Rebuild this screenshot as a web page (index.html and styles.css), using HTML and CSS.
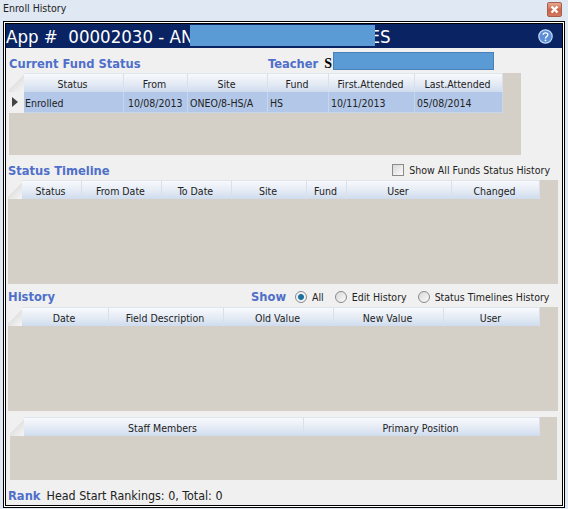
FILE: index.html
```html
<!DOCTYPE html>
<html>
<head>
    <title>Enroll History</title>
    <link rel="stylesheet" href="styles.css">
</head>
<body>
    <div class="window">
        <div class="titlebar">
            <span class="title">Enroll History</span>
            <button class="close">
                <svg width="9" height="9" viewBox="0 0 9 9"><path d="M1.5 1.5L7.5 7.5M7.5 1.5L1.5 7.5" stroke="#fff" stroke-width="2.4"/></svg>
            </button>
        </div>
        <div class="dialog">
            <div class="banner">
                <span class="app">App #  00002030 - AN<span class="redact name"></span><span class="tail">ES</span></span>
                <svg class="help" width="15" height="15" viewBox="0 0 15 15">
                    <circle cx="7.5" cy="7.5" r="6.7" fill="#5b8fd8" stroke="#c4d8f4" stroke-width="1.2"/>
                    <path d="M5.2 5.8C5.2 3.2 9.8 3.2 9.8 5.7C9.8 7.6 7.5 7.5 7.5 9.4" fill="none" stroke="#fff" stroke-width="1.4"/>
                    <circle cx="7.5" cy="11.3" r="0.9" fill="#fff"/>
                </svg>
            </div>

            <div class="head head-fund">
                <span class="heading fund-heading">Current Fund Status</span>
                <span class="heading">Teacher</span>
                <span class="teacher">S</span>
                <span class="redact teacher-name"></span>
            </div>
            <div class="grid grid-fund">
                <div class="cols cols-fund">
                    <div class="corner"></div>
                    <div class="th">Status</div>
                    <div class="th">From</div>
                    <div class="th">Site</div>
                    <div class="th">Fund</div>
                    <div class="th">First.Attended</div>
                    <div class="th">Last.Attended</div>
                </div>
                <div class="cols cols-fund row">
                    <div class="rowhead">
                        <svg width="6" height="10" viewBox="0 0 6 10"><path d="M0 0L6 5L0 10Z" fill="#444"/></svg>
                    </div>
                    <div class="td td-status">Enrolled</div>
                    <div class="td td-from">10/08/2013</div>
                    <div class="td">ONEO/8-HS/A</div>
                    <div class="td">HS</div>
                    <div class="td">10/11/2013</div>
                    <div class="td">05/08/2014</div>
                </div>
            </div>

            <div class="head head-timeline">
                <span class="heading">Status Timeline</span>
                <label class="option"><input type="checkbox" class="check">Show All Funds Status History</label>
            </div>
            <div class="grid grid-timeline">
                <div class="cols cols-timeline">
                    <div class="corner"></div>
                    <div class="th">Status</div>
                    <div class="th">From Date</div>
                    <div class="th">To Date</div>
                    <div class="th">Site</div>
                    <div class="th">Fund</div>
                    <div class="th">User</div>
                    <div class="th">Changed</div>
                </div>
            </div>

            <div class="head head-history">
                <span class="heading history-heading">History</span>
                <span class="heading show-heading">Show</span>
                <label class="option"><input type="radio" name="show" class="radio" checked>All</label>
                <label class="option"><input type="radio" name="show" class="radio">Edit History</label>
                <label class="option"><input type="radio" name="show" class="radio">Status Timelines History</label>
            </div>
            <div class="grid grid-history">
                <div class="cols cols-history">
                    <div class="corner"></div>
                    <div class="th">Date</div>
                    <div class="th">Field Description</div>
                    <div class="th">Old Value</div>
                    <div class="th">New Value</div>
                    <div class="th">User</div>
                </div>
            </div>

            <div class="grid grid-staff">
                <div class="cols cols-staff">
                    <div class="corner"></div>
                    <div class="th">Staff Members</div>
                    <div class="th">Primary Position</div>
                </div>
            </div>

            <div class="rank">
                <span class="heading">Rank</span>
                <span class="rank-text">Head Start Rankings: 0, Total: 0</span>
            </div>
        </div>
    </div>
</body>
</html>
```

FILE: styles.css
```css
* {
    box-sizing: border-box;
}

body {
    margin: 0;
    font-family: "DejaVu Sans", sans-serif;
    font-stretch: condensed;
    font-size: 10.5px;
    color: #222;
    background-color: #dfe8f3;
}

.window {
    width: 568px;
    height: 509px;
    padding: 0 3px 1px 3px;
    display: flex;
    flex-direction: column;
}

.titlebar {
    height: 21px;
    flex: none;
    display: flex;
    justify-content: space-between;
    padding-top: 2px;
}

.title {
    line-height: 12px;
}

.close {
    width: 15px;
    height: 15px;
    padding: 0;
    margin-right: 3px;
    border: 1px solid #a8604c;
    border-radius: 2px;
    display: flex;
    align-items: center;
    justify-content: center;
    background-image: linear-gradient(#e8a890, #cc6448 55%, #d07860);
}

.dialog {
    flex: 1;
    min-height: 0;
    padding: 2px;
    border: 1px solid #000;
    box-shadow: inset 0 0 0 1px #fff, inset 0 0 0 2px #000;
    background-color: #f0f0f0;
}

.banner {
    height: 24px;
    background-color: #0a2463;
    color: #fff;
    display: flex;
    justify-content: space-between;
    align-items: center;
    padding-right: 9px;
}

.app {
    font-size: 18.5px;
    white-space: pre;
    display: flex;
    align-items: center;
}

.redact {
    display: block;
    background-color: #5b9bd5;
}

.name {
    width: 185px;
    height: 21px;
    margin-left: -3px;
    margin-bottom: 2px;
    z-index: 1;
}

.tail {
    margin-left: -6px;
}

.help {
    display: block;
}

.head {
    display: flex;
    align-items: center;
}

.heading {
    font-size: 12.8px;
    font-weight: bold;
    color: #4f6fc9;
}

.head-fund {
    height: 25px;
    padding-left: 3px;
    padding-top: 6px;
}

.fund-heading {
    width: 259px;
}

.teacher {
    margin-left: 6px;
    font-family: "Liberation Serif", serif;
    font-size: 14px;
    font-weight: bold;
    color: #000;
}

.teacher-name {
    width: 161px;
    height: 18px;
    margin-left: 1px;
    margin-bottom: 6px;
    border: 1px solid #4a80b8;
}

.head-timeline {
    height: 25px;
    padding-left: 2px;
    padding-right: 12px;
    padding-top: 5px;
    justify-content: space-between;
}

.head-history {
    height: 23px;
    padding-left: 2px;
    padding-top: 2px;
}

.history-heading {
    width: 243px;
}

.show-heading {
    width: 44px;
}

.option {
    display: flex;
    align-items: center;
    gap: 5px;
    margin-right: 11px;
    white-space: nowrap;
}

.head-timeline .option {
    margin-right: 0;
}

.check,
.radio {
    appearance: none;
    width: 12px;
    height: 12px;
    margin: 0;
    border: 1px solid #8a8a8a;
    background-image: linear-gradient(135deg, #d8d8d8, #fbfbfb);
}

.radio {
    border-radius: 50%;
}

.radio:checked {
    background-image: radial-gradient(circle, #1f6f9f 0, #1f6f9f 2.5px, #eef2f6 3.5px);
}

.grid {
    background-color: #d4d0c8;
}

.grid-fund {
    width: 512px;
    height: 82px;
    margin-left: 3px;
}

.grid-timeline {
    width: 550px;
    height: 104px;
    margin-left: 2px;
}

.grid-history {
    width: 550px;
    height: 104px;
    margin-left: 2px;
}

.grid-staff {
    width: 547px;
    height: 63px;
    margin-left: 4px;
    margin-top: 6px;
}

.cols {
    display: grid;
    height: 19px;
}

.cols-fund {
    grid-template-columns: 15px 100px 64px 80px 61px 86px 88px;
}

.cols-timeline {
    grid-template-columns: 14px 60px 80px 70px 75px 40px 105px 88px;
}

.cols-history {
    grid-template-columns: 14px 87px 115px 110px 110px 96px;
}

.cols-staff {
    grid-template-columns: 14px 280px 236px;
}

.corner {
    background-color: #f0f0f0;
    background-image: linear-gradient(135deg, #f0f0f0 50%, #e2e2e2 50%, #f2f2f2 90%);
}

.th {
    display: flex;
    align-items: center;
    justify-content: center;
    padding-top: 2px;
    padding-right: 2px;
    border-right: 1px solid #d8e0ea;
    border-top: 1px solid #dfe5ec;
    background-image: linear-gradient(#f7f9fc, #e6ecf5 50%, #cfdcee);
}

.row {
    height: 21px;
}

.rowhead {
    background-color: #f0f0f0;
    padding: 5px 0 0 3px;
}

.rowhead svg {
    display: block;
}

.td {
    display: flex;
    align-items: center;
    padding-left: 2px;
    padding-top: 1px;
    background-color: #b3c8e8;
    border-right: 1px solid #c8d6ec;
    border-bottom: 1px solid #c8d6ec;
    white-space: nowrap;
}

.td-status {
    padding-left: 1px;
}

.td-from {
    padding-left: 4px;
}

.rank {
    height: 26px;
    display: flex;
    align-items: center;
    gap: 6px;
    padding-left: 2px;
    padding-top: 4px;
}

.rank-text {
    font-size: 12.4px;
}
```
